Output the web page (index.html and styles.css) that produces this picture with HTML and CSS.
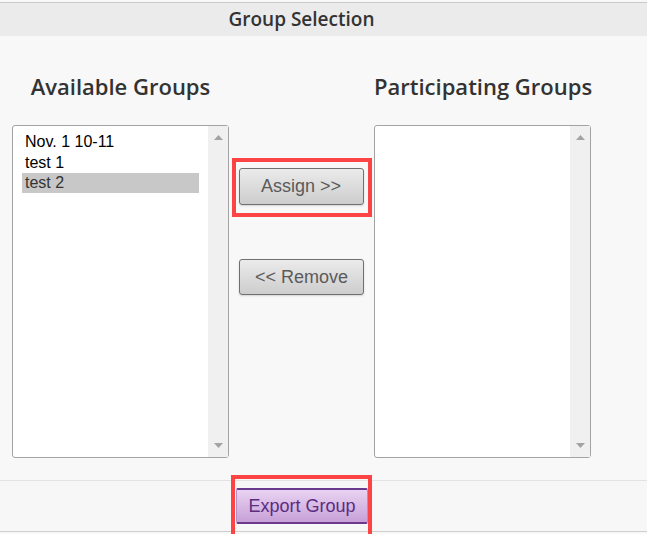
FILE: index.html
```html
<!DOCTYPE html>
<html>
<head>
<meta charset="utf-8">
<link rel="stylesheet" href="styles.css">
</head>
<body>
<div class="header"><span class="header-title">Group Selection</span></div>
<div class="main">
  <div class="col">
    <h2 class="col-title">Available Groups</h2>
    <div class="listbox">
      <div class="items">
        <div class="opt">Nov. 1 10-11</div>
        <div class="opt">test 1</div>
        <div class="opt selected">test 2</div>
      </div>
      <div class="scroll">
        <svg class="arr" width="9" height="5" viewBox="0 0 9 5"><polygon points="0,5 9,5 4.5,0" fill="#a3a3a3"/></svg>
        <svg class="arr" width="9" height="5" viewBox="0 0 9 5"><polygon points="0,0 9,0 4.5,5" fill="#a3a3a3"/></svg>
      </div>
    </div>
  </div>
  <div class="mid">
    <div class="mark mark-assign"><button class="btn">Assign &gt;&gt;</button></div>
    <button class="btn btn-remove">&lt;&lt; Remove</button>
  </div>
  <div class="col">
    <h2 class="col-title">Participating Groups</h2>
    <div class="listbox">
      <div class="items"></div>
      <div class="scroll">
        <svg class="arr" width="9" height="5" viewBox="0 0 9 5"><polygon points="0,5 9,5 4.5,0" fill="#a3a3a3"/></svg>
        <svg class="arr" width="9" height="5" viewBox="0 0 9 5"><polygon points="0,0 9,0 4.5,5" fill="#a3a3a3"/></svg>
      </div>
    </div>
  </div>
</div>
<div class="footer">
  <div class="foot-mid">
    <div class="mark mark-export"><button class="btn-export">Export Group</button></div>
  </div>
</div>
</body>
</html>
```
FILE: styles.css
```css
html, body {
  margin: 0;
  padding: 0;
}
body {
  background: #f8f8f8;
  width: 647px;
  height: 534px;
  overflow: hidden;
  font-family: "Liberation Sans", Arial, sans-serif;
}
.header {
  margin-top: 2px;
  border-top: 1px solid #c9c9c9;
  background: #ebebeb;
  height: 33px;
  padding-right: 44px;
  display: flex;
  justify-content: center;
  align-items: center;
}
.header-title {
  font-family: "Open Sans", sans-serif;
  font-weight: 600;
  font-size: 19px;
  line-height: 26px;
  color: #333;
  margin-top: -1px;
}
.main {
  display: flex;
  padding-left: 12px;
  height: 444px;
  box-sizing: border-box;
}
.col {
  width: 217px;
  display: flex;
  flex-direction: column;
  padding-top: 35px;
}
.col-title {
  margin: 0 0 24px 0;
  font-family: "Open Sans", sans-serif;
  font-weight: 600;
  font-size: 22px;
  line-height: 30px;
  color: #333;
  text-align: center;
  white-space: nowrap;
}
.listbox {
  height: 333px;
  box-sizing: border-box;
  border: 1px solid #a3a3a3;
  border-radius: 3px;
  background: #fff;
  display: flex;
}
.items {
  flex: 1;
  padding: 5px 9px 0 9px;
}
.opt {
  height: 21px;
  line-height: 21px;
  padding-left: 3px;
  font-size: 16px;
  color: #000;
}
.opt.selected {
  background: #c8c8c8;
  color: #333;
  height: 20px;
  line-height: 20px;
}
.scroll {
  width: 20px;
  background: #f0f0f0;
  display: flex;
  flex-direction: column;
  justify-content: space-between;
  align-items: center;
  padding: 9px 0 9px 0;
}
.arr {
  display: block;
}
.mid {
  width: 145px;
  display: flex;
  flex-direction: column;
  align-items: center;
  padding-top: 122px;
}
.mark {
  border: 4px solid #fd4444;
  box-sizing: border-box;
  width: 140px;
}
.mark-assign {
  padding: 6px 3px 8px 3px;
}
.btn {
  width: 125px;
  height: 37px;
  border: 1px solid #707070;
  border-radius: 3px;
  background: linear-gradient(#ebebeb, #cdcdcd);
  box-shadow: 0 1px 2px rgba(0, 0, 0, 0.15);
  font-family: "Liberation Sans", Arial, sans-serif;
  font-size: 18px;
  color: #5a5a5a;
  padding: 0;
  display: block;
}
.btn-remove {
  margin-top: 42px;
  height: 36px;
}
.footer {
  border-top: 1px solid #e3e3e3;
  border-bottom: 1px solid #cfcfcf;
  background: #f7f7f7;
  height: 52px;
  padding-left: 229px;
  box-sizing: border-box;
}
.foot-mid {
  width: 145px;
  display: flex;
  justify-content: center;
}
.mark-export {
  width: 141px;
  margin-top: -6px;
  padding: 9px 0 0 1px;
  height: 64px;
  border-bottom: none;
}
.btn-export {
  display: block;
  width: 132px;
  height: 36px;
  padding: 0;
  border: none;
  border-top: 2px solid #6b3a8e;
  border-bottom: 2px solid #6b3a8e;
  border-left: 1px solid #b590c8;
  border-right: 1px solid #b590c8;
  border-radius: 2px;
  background: linear-gradient(#e9d3f2, #c7a0d7);
  font-family: "Liberation Sans", Arial, sans-serif;
  font-size: 18px;
  color: #5b2c80;
}
```
